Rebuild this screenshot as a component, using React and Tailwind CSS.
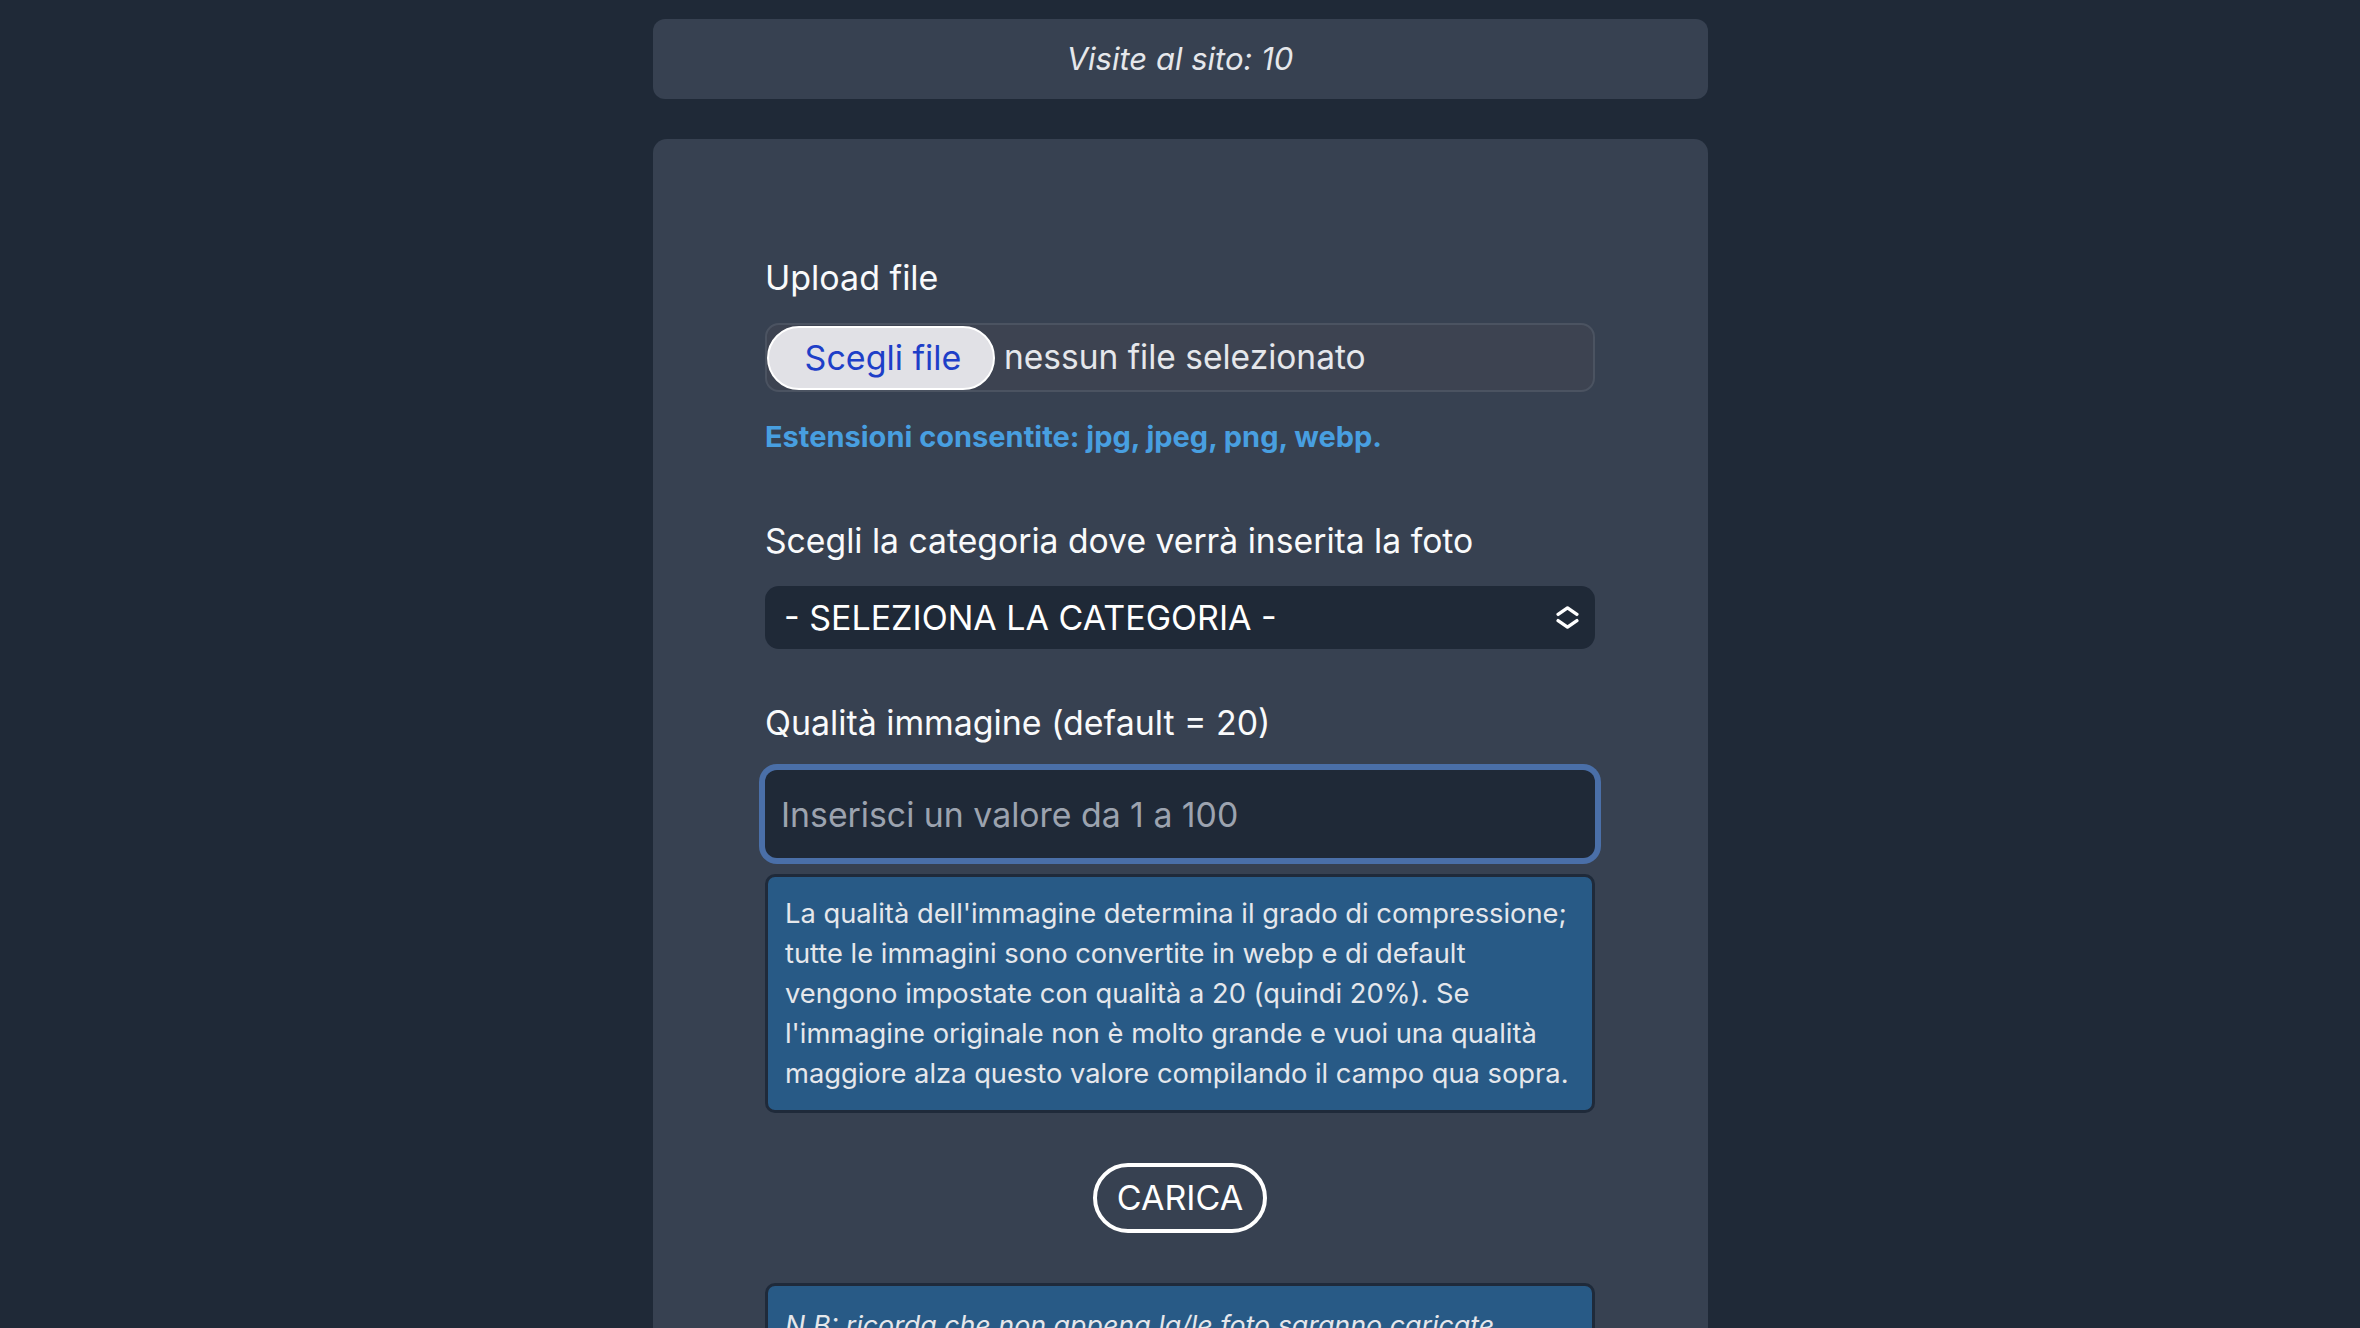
import React from "react";

function UpDown() {
  return (
    <svg width="23" height="23" viewBox="0 0 22 22" fill="none" stroke="#ffffff" strokeWidth="3.2" strokeLinecap="round" strokeLinejoin="round">
      <polyline points="2,8 11,1.8 20,8" />
      <polyline points="2,14 11,20.2 20,14" />
    </svg>
  );
}

export default function App() {
  return (
    <div className="h-[1328px] overflow-hidden bg-[#1f2937] font-['Inter',sans-serif]">
      <div className="w-[1055px] mx-auto pt-[19px]">
        <div className="h-[80px] rounded-[12px] bg-[#374151] flex items-center justify-center">
          <span className="italic text-[31px] text-[#e5e7eb]">Visite al sito: 10</span>
        </div>

        <div className="mt-[40px] rounded-t-[14px] bg-[#374151] pt-[115px] pb-[60px] flex justify-center">
          <div className="w-[830px] flex flex-col">
            <label className="block text-[34px] leading-[48px] text-[#f9fafb]">Upload file</label>

            <div className="mt-[21px] h-[69px] rounded-[14px] border-2 border-[#4b5361] bg-[#3d4351] flex items-center">
              <button className="h-[64px] w-[228px] rounded-full border-2 border-white bg-[#e1e1e6] pl-[4px] text-[34px] text-[#1e3fc8] leading-none">
                Scegli file
              </button>
              <span className="ml-[9px] text-[33.5px] text-[#e5e7eb] whitespace-nowrap">nessun file selezionato</span>
            </div>

            <p className="mt-[25px] text-[29px] leading-[40px] font-bold text-[#489fe0]">
              Estensioni consentite: jpg, jpeg, png, webp.
            </p>

            <label className="mt-[60px] block text-[33.7px] leading-[48px] text-[#f9fafb]">
              Scegli la categoria dove verrà inserita la foto
            </label>

            <div className="mt-[21px] h-[63px] rounded-[14px] bg-[#1f2937] flex items-center justify-between pl-[19px] pr-[16px]">
              <span className="text-[34px] text-white whitespace-nowrap">- SELEZIONA LA CATEGORIA -</span>
              <UpDown />
            </div>

            <label className="mt-[50px] block text-[33.9px] leading-[48px] text-[#f9fafb]">
              Qualità immagine (default = 20)
            </label>

            <input
              type="text"
              placeholder="Inserisci un valore da 1 a 100"
              className="mt-[23px] h-[88px] w-full rounded-[12px] bg-[#1f2937] pl-[16px] text-[33.8px] text-white placeholder:text-[#9ca3af] outline-none ring-[6px] ring-[#4a6fa8]"
            />

            <div className="mt-[16px] rounded-[10px] border-[3px] border-[#1f2a3a] bg-[#285a86] pt-[17px] pb-[16px] px-[17px] text-[27.3px] leading-[40px] text-[#e5e7eb] whitespace-nowrap">
              La qualità dell'immagine determina il grado di compressione;
              <br />
              tutte le immagini sono convertite in webp e di default
              <br />
              vengono impostate con qualità a 20 (quindi 20%). Se
              <br />
              l'immagine originale non è molto grande e vuoi una qualità
              <br />
              maggiore alza questo valore compilando il campo qua sopra.
            </div>

            <div className="mt-[50px] flex justify-center">
              <button className="h-[70px] rounded-full border-4 border-white px-[20px] text-[34px] text-white leading-none">
                CARICA
              </button>
            </div>

            <div className="mt-[50px] rounded-[10px] border-[3px] border-[#1f2a3a] bg-[#285a86] pt-[19px] pb-[16px] px-[17px] text-[26.8px] leading-[40px] text-[#e5e7eb] italic">
              N.B: ricorda che non appena la/le foto saranno caricate
            </div>
          </div>
        </div>
      </div>
    </div>
  );
}
